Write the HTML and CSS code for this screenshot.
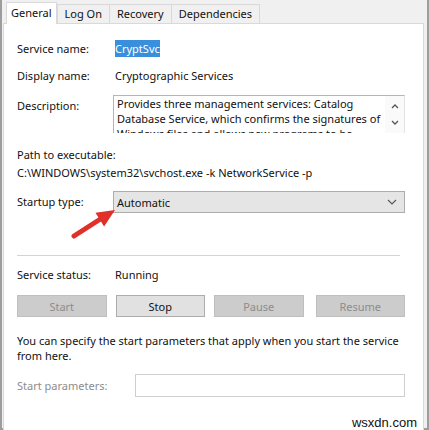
FILE: index.html
```html
<!DOCTYPE html>
<html>
<head>
<meta charset="utf-8">
<link rel="stylesheet" href="styles.css">
</head>
<body>
<div class="window">
  <div class="tabs">
    <div class="tab active">General</div>
    <div class="tab">Log On</div>
    <div class="tab">Recovery</div>
    <div class="tab">Dependencies</div>
  </div>
  <div class="panel">
    <div class="row r1"><div class="label">Service name:</div><div class="value"><span class="sel">CryptSvc</span></div></div>
    <div class="row r2"><div class="label">Display name:</div><div class="value">Cryptographic Services</div></div>
    <div class="row r3">
      <div class="label lab-top">Description:</div>
      <div class="desc">
        <div class="desc-text">Provides three management services: Catalog Database Service, which confirms the signatures of Windows files and allows new programs to be installed</div>
        <div class="desc-scroll">
          <svg width="10" height="30" viewBox="0 0 10 30"><path d="M2 8 L5 5 L8 8" fill="none" stroke="#555" stroke-width="1.3"/><path d="M2 21 L5 24 L8 21" fill="none" stroke="#555" stroke-width="1.3"/></svg>
        </div>
      </div>
    </div>
    <div class="line path-label">Path to executable:</div>
    <div class="line path-value">C:\WINDOWS\system32\svchost.exe -k NetworkService -p</div>
    <div class="row r-startup">
      <div class="label">Startup type:</div>
      <div class="select">
        <span>Automatic</span>
        <svg width="10" height="6" viewBox="0 0 10 6"><path d="M1 1 L5 5 L9 1" fill="none" stroke="#555" stroke-width="1.1"/></svg>
      </div>
    </div>
    <div class="sep"></div>
    <div class="row r-status"><div class="label">Service status:</div><div class="value">Running</div></div>
    <div class="buttons">
      <div class="btn disabled">Start</div>
      <div class="btn">Stop</div>
      <div class="btn disabled">Pause</div>
      <div class="btn disabled">Resume</div>
    </div>
    <div class="para">You can specify the start parameters that apply when you start the service from here.</div>
    <div class="row r-params">
      <div class="label params-label">Start parameters:</div>
      <div class="params-input"></div>
    </div>
    <div class="watermark">wsxdn.com</div>
    <svg class="arrow" width="56" height="42" viewBox="0 0 56 42">
      <path d="M8 35 L36 17" stroke="#e0302a" stroke-width="5" stroke-linecap="round"/>
      <path d="M49 9 L29.5 11.8 L38.1 25.4 Z" fill="#e0302a"/>
    </svg>
  </div>
</div>
</body>
</html>
```

FILE: styles.css
```css
* { box-sizing: border-box; }
html, body { margin: 0; padding: 0; }
body {
  width: 429px;
  height: 430px;
  background: #ffffff;
  font-family: "Noto Sans", "Liberation Sans", Arial, sans-serif;
  font-size: 11px;
  color: #111111;
  overflow: hidden;
}
.window {
  width: 429px;
  height: 430px;
  background: #f0f0f0;
  border-left: 2px solid #9d9d9d;
  border-right: 2px solid #9d9d9d;
  border-bottom: 2px solid #9d9d9d;
  display: flex;
  flex-direction: column;
  padding: 2px 3px 1px 1px;
}
.tabs {
  display: flex;
  align-items: flex-end;
  height: 21px;
  padding-left: 3px;
  position: relative;
  z-index: 2;
}
.tab {
  height: 19px;
  line-height: 18px;
  padding: 0 7px;
  background: #f0f0f0;
  border: 1px solid #d9d9d9;
  border-bottom: none;
  margin-left: -1px;
  color: #111111;
}
.tab.active {
  height: 22px;
  line-height: 19px;
  background: #ffffff;
  border-color: #d9d9d9;
  margin-bottom: -1px;
  padding: 0 4px;
  margin-left: 0;
  margin-right: 1px;
}
.panel {
  flex: 1;
  background: #ffffff;
  border: 1px solid #d9d9d9;
  position: relative;
  padding: 0 18px 0 13px;
  display: flex;
  flex-direction: column;
}
.row { display: flex; align-items: center; }
.label { width: 98px; flex: none; line-height: 16px; }
.value { line-height: 16px; }
.sel {
  background: #3a8fdc;
  color: #ffffff;
  padding: 1px 0;
}
.r1 { margin-top: 17px; height: 16px; }
.r2 { margin-top: 11px; height: 16px; }
.r3 { margin-top: 11px; align-items: flex-start; }
.lab-top { margin-top: 3px; }
.desc {
  flex: 1;
  height: 38px;
  border: 1px solid #b5b5b5;
  border-right-color: #e3e3e3;
  border-bottom: none;
  display: flex;
  overflow: hidden;
  margin-left: -2px;
}
.desc-text {
  flex: 1;
  padding: 0 2px 0 3px;
  line-height: 15px;
  overflow: hidden;
  height: 37px;
}
.desc-scroll {
  width: 19px;
  flex: none;
  display: flex;
  align-items: center;
  justify-content: center;
  background: #fafafa;
}
.line { line-height: 16px; }
.path-label { margin-top: 14px; }
.path-value { margin-top: 2px; }
.r-startup { margin-top: 10px; }
.select {
  flex: 1;
  height: 22px;
  background: #e5e5e5;
  border: 1px solid #adadad;
  display: flex;
  align-items: center;
  justify-content: space-between;
  padding: 0 7px 0 3px;
  margin-left: -2px;
}
.sep {
  margin-top: 42px;
  height: 1px;
  background: #d3d3d3;
  margin-right: 5px;
}
.r-status { margin-top: 11px; height: 16px; }
.buttons {
  margin-top: 12px;
  display: flex;
  gap: 9px;
}
.btn {
  width: 90px;
  height: 22px;
  border: 1px solid #adadad;
  background: #e1e1e1;
  display: flex;
  align-items: center;
  justify-content: center;
}
.btn:last-child { margin-left: 3px; }
.btn.disabled {
  background: #cccccc;
  border-color: #bfbfbf;
  color: #8d8d8d;
}
.para {
  margin-top: 16px;
  line-height: 15px;
  margin-right: -6px;
}
.r-params { margin-top: 11px; }
.params-label { width: 118px; color: #8d8d8d; }
.params-input {
  flex: 1;
  height: 23px;
  border: 1px solid #cfcfcf;
  background: #ffffff;
}
.watermark {
  margin-top: 18px;
  align-self: flex-end;
  margin-right: -12px;
  font-family: "Liberation Sans", Arial, sans-serif;
  font-size: 13px;
  color: #111;
  line-height: 16px;
}
.arrow {
  position: absolute;
  left: 62px;
  top: 177px;
}
```
